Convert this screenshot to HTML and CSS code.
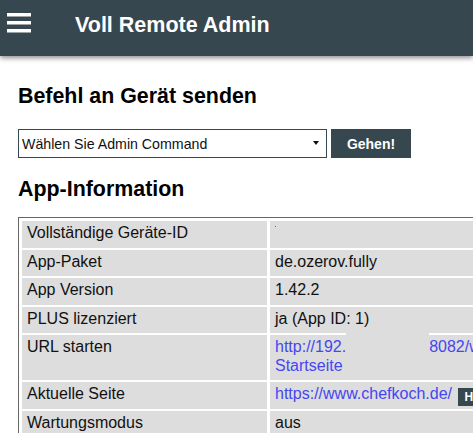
FILE: index.html
```html
<!DOCTYPE html>
<html lang="de">
<head>
<meta charset="utf-8">
<title>Voll Remote Admin</title>
<link rel="stylesheet" href="styles.css">
</head>
<body>
<header class="topbar">
  <span class="menu" aria-label="Menü">
    <svg width="24" height="20" viewBox="0 0 24 20"><rect x="0" y="0" width="24" height="3.5" fill="#fff"/><rect x="0" y="8" width="24" height="3.5" fill="#fff"/><rect x="0" y="16" width="24" height="3.5" fill="#fff"/></svg>
  </span>
  <span class="title">Voll Remote Admin</span>
</header>
<main class="content">
  <h2 class="heading heading-first">Befehl an Gerät senden</h2>
  <form class="cmd-form">
    <div class="select-wrap">
      <select class="cmd-select"><option>Wählen Sie Admin Command</option></select>
    </div>
    <button type="button" class="btn btn-go">Gehen!</button>
  </form>
  <h2 class="heading heading-info">App-Information</h2>
  <table class="info">
    <tr><td class="key">Vollständige Geräte-ID</td><td class="val"><span class="dot"></span></td></tr>
    <tr><td class="key">App-Paket</td><td class="val">de.ozerov.fully</td></tr>
    <tr><td class="key">App Version</td><td class="val">1.42.2</td></tr>
    <tr><td class="key">PLUS lizenziert</td><td class="val">ja (App ID: 1)</td></tr>
    <tr><td class="key">URL starten</td><td class="val"><span class="nowrap"><a class="link" href="#">http://192.</a><span class="redact"></span><a class="link" href="#">8082/webview</a></span><br><a class="link" href="#">Startseite</a></td></tr>
    <tr><td class="key">Aktuelle Seite</td><td class="val nowrap"><a class="link" href="#">https://www.chefkoch.de/</a> <button type="button" class="btn btn-small">Hinzufügen</button></td></tr>
    <tr><td class="key">Wartungsmodus</td><td class="val">aus</td></tr>
    <tr><td class="key">Kiosk-Modus</td><td class="val">aus</td></tr>
  </table>
</main>
</body>
</html>
```
FILE: styles.css
```css
html, body {
  overflow: hidden;
}
body {
  margin: 0;
  background: #fff;
  color: #111;
  font-family: "Liberation Sans", Arial, sans-serif;
}
.topbar {
  box-sizing: border-box;
  height: 56px;
  background: #37474f;
  display: flex;
  align-items: flex-start;
  padding: 13px 0 0 7px;
  box-shadow: 0 2px 5px rgba(0, 0, 0, 0.45);
  position: relative;
}
.menu {
  display: block;
  width: 24px;
  height: 20px;
}
.menu svg {
  display: block;
}
.title {
  margin-left: 44px;
  color: #fff;
  font-weight: bold;
  font-size: 21.5px;
  line-height: 24px;
  white-space: nowrap;
}
.content {
  padding: 0 0 0 18px;
}
.heading {
  margin: 0;
  font-size: 21.4px;
  line-height: 24px;
  font-weight: bold;
  color: #000;
  white-space: nowrap;
}
.heading-first {
  margin-top: 28px;
}
.heading-info {
  margin-top: 19px;
}
.cmd-form {
  margin: 21px 0 0;
  display: flex;
  gap: 4px;
}
.select-wrap {
  position: relative;
  width: 309px;
  height: 29px;
}
.select-wrap::after {
  content: "";
  position: absolute;
  right: 8px;
  top: 12px;
  border-left: 3.5px solid transparent;
  border-right: 3.5px solid transparent;
  border-top: 4px solid #111;
}
.cmd-select {
  appearance: none;
  -webkit-appearance: none;
  box-sizing: border-box;
  width: 100%;
  height: 29px;
  margin: 0;
  padding: 0 20px 0 3px;
  border: 1px solid #37474f;
  border-radius: 0;
  background: #fff;
  color: #111;
  font-family: "Liberation Sans", Arial, sans-serif;
  font-size: 14.2px;
}
.btn {
  border: none;
  border-radius: 0;
  background: #37474f;
  color: #fff;
  font-family: "Liberation Sans", Arial, sans-serif;
  font-weight: bold;
  cursor: pointer;
}
.btn-go {
  box-sizing: border-box;
  width: 80px;
  height: 29px;
  font-size: 14px;
  padding: 0;
}
.btn-small {
  font-size: 12px;
  line-height: 14px;
  padding: 2px 6px;
  margin: 0 0 -4px 2px;
  vertical-align: -2px;
}
.info {
  margin-top: 16px;
  border: 1px solid #666;
  border-collapse: separate;
  border-spacing: 3px 2px;
  padding: 1px 0 0 0;
  width: 720px;
  font-size: 16px;
  line-height: 18.5px;
}
.info td {
  background: #ddd;
  padding: 3px 5px 5px;
  vertical-align: top;
  color: #111;
}
.info .key {
  box-sizing: border-box;
  width: 245px;
  white-space: nowrap;
}
.nowrap {
  white-space: nowrap;
}
.link {
  color: #4646f0;
  text-decoration: none;
}
.dot {
  display: inline-block;
  width: 1px;
  height: 1px;
  background: #666;
  vertical-align: top;
  margin-top: 2px;
}
.redact {
  display: inline-block;
  width: 83px;
  height: 18.5px;
  vertical-align: top;
  position: relative;
}
.redact::before {
  content: "";
  position: absolute;
  left: 0;
  right: 0;
  top: -5px;
  height: 5px;
  background: #ddd;
}
```
